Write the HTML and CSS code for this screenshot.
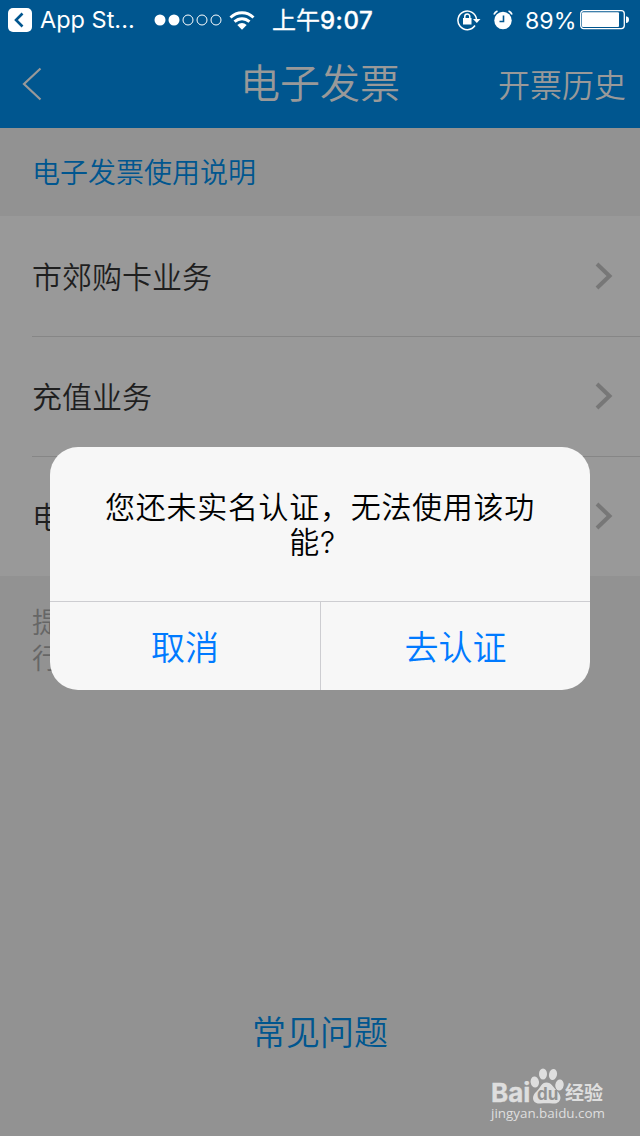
FILE: index.html
```
<!DOCTYPE html>
<html lang="zh-CN">
<head>
<meta charset="utf-8">
<title>电子发票</title>
<link rel="stylesheet" href="styles.css">
</head>
<body>
<div class="screen">
  <header class="top">
    <div class="status">
      <svg class="back-app" width="24" height="24" viewBox="0 0 24 24"><rect width="24" height="24" rx="5" fill="#fff"/><path d="M14.500 5.500 8 12l6.500 6.500" fill="none" stroke="#00568f" stroke-width="2.600"/></svg>
      <span class="app">App St...</span>
      <svg class="signal" width="68" height="12" viewBox="0 0 68 12" fill="none" stroke="#fff"><circle cx="6" cy="6" r="5.500" fill="#fff" stroke="none"/><circle cx="20" cy="6" r="5.500" fill="#fff" stroke="none"/><circle cx="34" cy="6" r="5"/><circle cx="48" cy="6" r="5"/><circle cx="62" cy="6" r="5"/></svg>
      <svg class="wifi" width="26" height="19" viewBox="0 0 26 19" fill="none" stroke="#fff" stroke-width="2.900"><path d="M1.500 6.500C8 .2 18 .2 24.500 6.500M5.500 10.700c4.500-4 10.500-4 15 0"/><path d="M8.300 14q4.700-3.800 9.400 0L13 18.800z" fill="#fff" stroke="none"/></svg>
      <span class="time">上午<b>9:07</b></span>
      <svg class="lock" width="24" height="22" viewBox="0 0 24 22" fill="none" stroke="#fff" stroke-width="1.500"><path d="M18 16.500a9.300 9.300 0 1 1 1.500-6"/><path d="M16 10h7.500l-3.700 4z" fill="#fff" stroke="none"/><rect x="6" y="9" width="8.500" height="6.500" fill="#fff" stroke="none"/><path d="M7.800 9V7.500a2.500 2.500 0 0 1 5 0V9"/></svg>
      <svg class="alarm" width="20" height="20" viewBox="0 0 20 20" fill="none" stroke="#fff"><circle cx="10" cy="10.500" r="8.700" fill="#fff" stroke="none"/><path d="M1 4.500q1-2.500 3.500-3.500M15.500 1q2.500 1 3.500 3.500" stroke-width="1.800"/><path d="M10.500 5.500v6H6.500" stroke="#00568f" stroke-width="1.600"/></svg>
      <span class="percent">89%</span>
      <svg class="battery" width="50" height="20" viewBox="0 0 50 20"><rect x=".7" y=".7" width="43.600" height="17.900" rx="3" fill="none" stroke="#fff" stroke-width="1.300"/><rect x="2" y="2.300" width="37" height="14.700" rx="1" fill="#fff"/><path d="M46 6.300q3 .5 3 3.400t-3 3.400z" fill="#fff"/></svg>
    </div>
    <nav class="nav">
      <svg class="nav-back" width="20" height="34" viewBox="0 0 20 34"><path d="M18.500 1.500 2 17l16.500 15.500" fill="none" stroke="#999" stroke-width="2.200"/></svg>
      <h1 class="title">电子发票</h1>
      <span class="history">开票历史</span>
    </nav>
  </header>
  <main class="content">
    <div class="guide">电子发票使用说明</div>
    <ul class="list">
      <li class="row"><span>市郊购卡业务</span><svg class="chevron" width="18" height="28" viewBox="0 0 18 28"><path d="M2 2l12.500 12L2 26" /></svg></li>
      <li class="row"><span>充值业务</span><svg class="chevron" width="18" height="28" viewBox="0 0 18 28"><path d="M2 2l12.500 12L2 26" /></svg></li>
      <li class="row"><span>电</span><svg class="chevron" width="18" height="28" viewBox="0 0 18 28"><path d="M2 2l12.500 12L2 26" /></svg></li>
    </ul>
    <p class="hint">提<br>行</p>
    <div class="faq">常见问题</div>
  </main>
  <div class="dialog">
    <p class="message">您还未实名认证，无法使用该功<br><span class="tail">能?</span></p>
    <div class="actions"><span class="action">取消</span><span class="action">去认证</span></div>
  </div>
  <div class="watermark">
    <div class="brand">
      <span class="bai">Bai</span>
      <svg class="paw" width="34" height="36" viewBox="0 0 34 36"><g fill="#dedede"><ellipse cx="4.800" cy="14" rx="4.200" ry="5.500" transform="rotate(-8 4.800 14)"/><ellipse cx="13" cy="6" rx="4" ry="5.500"/><ellipse cx="23" cy="6.500" rx="4" ry="5.500" transform="rotate(12 23 6.500)"/><ellipse cx="29.500" cy="17" rx="4.200" ry="5.500" transform="rotate(8 29.500 17)"/><path d="M16.500 14.500c5 0 7 5 10 8 7 6 4 14-4 13-4-.5-8-.5-12 0-8 1-10-7-4-12 4-4 5-9 10-9z"/></g><text class="du" x="7" y="32">du</text></svg>
      <span class="jingyan">经验</span>
    </div>
    <div class="site">jingyan.baidu.com</div>
  </div>
</div>
</body>
</html>
```
FILE: styles.css
```
* { box-sizing: border-box; }
body, h1, p, ul { margin: 0; padding: 0; }
body { font-family: Inter, "Noto Sans CJK SC", sans-serif; font-weight: 350; }
.screen { position: relative; width: 640px; height: 1136px; background: #929292; display: flex; flex-direction: column; overflow: hidden; white-space: nowrap; }
.top { height: 128px; background: #00568f; }
.status { height: 40px; display: flex; align-items: center; padding-left: 8px; color: #fff; font-size: 24px; line-height: 40px; font-weight: 400; }
.status svg { flex: none; }
.app { flex: none; width: 95px; margin-left: 8px; font-size: 23.500px; }
.signal { margin-left: 19px; }
.wifi { margin-left: 7px; }
.time { flex: none; width: 103px; margin: 2px 0 0 17px; -webkit-text-stroke: .3px #fff; }
.time b { font-weight: 500; font-size: 24px; letter-spacing: .5px; }
.lock { margin-left: 82px; }
.alarm { margin-left: 12px; }
.percent { flex: none; width: 49px; margin: 2px 0 0 12px; font-size: 23.200px; }
.battery { margin-left: 6px; }
.nav { height: 88px; display: grid; grid-template-columns: 1fr auto 1fr; align-items: center; padding: 0 14px 0 22px; color: #999; }
.title { font-size: 40px; line-height: 60px; font-weight: 350; margin: -1px 0 0 -8px; }
.history { justify-self: end; margin-top: -3px; font-size: 32px; }
.content { flex: 1; display: flex; flex-direction: column; }
.guide { height: 88px; padding: 1px 0 0 32px; color: #00568f; font-size: 28px; line-height: 88px; }
.list { list-style: none; background: #999; }
.row { height: 120px; margin-left: 32px; padding-right: 27px; display: flex; align-items: center; justify-content: space-between; color: #1f1f1f; font-size: 30px; }
.row span { margin-top: -3px; }
.row + .row { border-top: 1px solid #868686; }
.row + .row .chevron { margin-top: -2px; }
.chevron path { fill: none; stroke: #777; stroke-width: 4; }
.hint { margin: 29px 0 0 32px; color: #666; font-size: 28px; line-height: 36px; }
.faq { margin: auto 0 78px; text-align: center; color: #00568f; font-size: 34px; line-height: 50px; }
.dialog { position: absolute; left: 50px; top: 447px; width: 540px; height: 243px; border-radius: 28px; background: #f7f7f7; display: flex; flex-direction: column; overflow: hidden; }
.message { flex: 1; padding-top: 43px; text-align: center; color: #000; font-size: 30px; letter-spacing: .7px; line-height: 35px; }
.tail { margin-right: 15px; }
.actions { height: 89px; display: grid; grid-template-columns: 270px 270px; border-top: 1px solid #cdcdd1; color: #007aff; font-size: 34px; line-height: 92px; text-align: center; }
.action + .action { border-left: 1px solid #cdcdd1; }
.watermark { position: absolute; left: 491px; top: 1067px; color: #dedede; }
.brand { display: flex; align-items: flex-end; height: 37px; }
.bai { width: 38px; font-weight: 700; font-size: 26px; line-height: 23px; -webkit-text-stroke: .4px #dedede; }
.paw { margin-left: 1px; }
.du { font: 700 17px Inter, sans-serif; fill: #929292; }
.jingyan { font-size: 19px; font-weight: 700; line-height: 21px; margin-left: 1px; }
.site { font: 400 13.400px/18px "Open Sans", sans-serif; }
```
